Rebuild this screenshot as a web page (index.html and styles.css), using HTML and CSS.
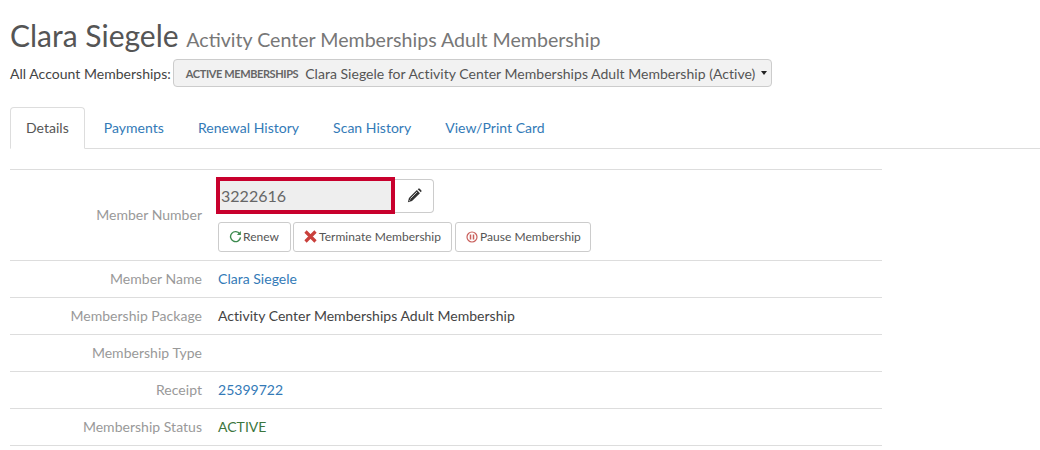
FILE: index.html
```html
<!DOCTYPE html>
<html lang="en">
<head>
    <meta charset="UTF-8">
    <title>Clara Siegele Membership</title>
    <link rel="stylesheet" href="styles.css">
</head>
<body>
    <h1 class="page-title">Clara Siegele <small>Activity Center Memberships Adult Membership</small></h1>
    <div class="account-line">
        <span>All Account Memberships:</span>
        <button class="picker" type="button">
            <span class="picker-group">ACTIVE MEMBERSHIPS</span>
            <span>Clara Siegele for Activity Center Memberships Adult Membership (Active)</span>
            <span class="caret"></span>
        </button>
    </div>

    <ul class="tabs">
        <li class="tab active">Details</li>
        <li class="tab">Payments</li>
        <li class="tab">Renewal History</li>
        <li class="tab">Scan History</li>
        <li class="tab">View/Print Card</li>
    </ul>

    <div class="details">
        <div class="row row-number">
            <div class="label">Member Number</div>
            <div class="value">
                <div class="number-line">
                    <div class="number-box">3222616</div>
                    <button class="edit-btn" type="button" aria-label="Edit">
                        <svg width="15" height="15" viewBox="0 0 14 14"><path d="M.8 13.2l1-3.9 7.4-7.4 2.9 2.9-7.4 7.4z" fill="#333"/><path d="M10 1.1l.5-.4c.4-.4 1-.4 1.4 0l1.4 1.4c.4.4.4 1 0 1.4l-.4.5z" fill="#333"/><path d="M3.2 9.9l6.2-6.2M2.2 11.8l.9-.9" stroke="#fff" stroke-width=".7"/></svg>
                    </button>
                </div>
                <div class="actions">
                    <button class="btn btn-renew" type="button">
                        <svg width="13" height="13" viewBox="0 0 14 14"><path d="M11.6 4.2A5.4 5.4 0 1 0 12.4 8" fill="none" stroke="#3c8a4e" stroke-width="1.5"/><path d="M12.8 1.2v4.3H8.5z" fill="#3c8a4e"/></svg>
                        Renew
                    </button>
                    <button class="btn" type="button">
                        <svg width="13" height="13" viewBox="0 0 13 13"><path d="M1.5 1.5l10 10M11.5 1.5l-10 10" stroke="#c9403c" stroke-width="3.2"/></svg>
                        Terminate Membership
                    </button>
                    <button class="btn btn-pause" type="button">
                        <svg width="12" height="12" viewBox="0 0 12 12"><circle cx="6" cy="6" r="5" fill="none" stroke="#c9605c" stroke-width="1.2"/><path d="M4.5 3.6v4.8M7.5 3.6v4.8" stroke="#c9605c" stroke-width="1.5"/></svg>
                        Pause Membership
                    </button>
                </div>
            </div>
        </div>
        <div class="row">
            <div class="label">Member Name</div>
            <div class="value"><a href="#">Clara Siegele</a></div>
        </div>
        <div class="row">
            <div class="label">Membership Package</div>
            <div class="value">Activity Center Memberships Adult Membership</div>
        </div>
        <div class="row">
            <div class="label">Membership Type</div>
            <div class="value"></div>
        </div>
        <div class="row">
            <div class="label">Receipt</div>
            <div class="value"><a href="#">25399722</a></div>
        </div>
        <div class="row">
            <div class="label">Membership Status</div>
            <div class="value status">ACTIVE</div>
        </div>
    </div>
</body>
</html>
```

FILE: styles.css
```css
body {
    font-family: 'Lato', sans-serif;
    font-size: 14px;
    letter-spacing: .025px;
    color: #555;
    background: #fff;
    margin: 0;
    padding: 0 0 0 10px;
    overflow: hidden;
}
a {
    color: #337ab7;
    text-decoration: none;
}
.page-title {
    font-size: 30px;
    font-weight: 400;
    line-height: 36px;
    letter-spacing: 0;
    margin: 0;
    padding-top: 17px;
}
.page-title small {
    font-size: 19.6px;
    color: #777;
}
.account-line {
    display: flex;
    align-items: center;
    gap: 2px;
    margin-top: 1px;
    height: 28px;
    color: #444;
}
.picker {
    display: flex;
    align-items: center;
    height: 28px;
    padding: 0 4px 0 12px;
    font-family: inherit;
    font-size: 14px;
    letter-spacing: .03px;
    color: #555;
    background: #f2f2f2;
    border: 1px solid #ccc;
    border-radius: 4px;
}
.picker-group {
    font-size: 11px;
    font-weight: 700;
    letter-spacing: -.4px;
    color: #666;
    margin-right: 7px;
}
.caret {
    width: 0;
    height: 0;
    margin-left: 6px;
    border-top: 4px solid #222;
    border-left: 3.5px solid transparent;
    border-right: 3.5px solid transparent;
}
.tabs {
    display: flex;
    list-style: none;
    margin: 20px 0 0;
    padding: 0;
    border-bottom: 1px solid #ddd;
}
.tab {
    padding: 0 14px 0 18px;
    height: 40px;
    line-height: 40px;
    color: #337ab7;
    margin-bottom: -1px;
    border: 1px solid transparent;
}
.tab.active {
    padding: 0 15px;
    color: #555;
    background: #fff;
    border-color: #ddd;
    border-bottom-color: #fff;
    border-radius: 4px 4px 0 0;
}
.details {
    width: 872px;
    margin-top: 20px;
    border-top: 1px solid #ddd;
}
.row {
    display: flex;
    align-items: center;
    height: 34px;
    padding-bottom: 2px;
    border-bottom: 1px solid #ddd;
}
.row-number {
    height: 88px;
}
.row-number .value {
    margin-top: 1px;
}
.label {
    width: 192px;
    text-align: right;
    color: #999;
}
.value {
    margin-left: 16px;
    color: #444;
}
.status {
    color: #3c763d;
}
.number-line {
    display: flex;
    align-items: center;
    margin-left: -2px;
}
.number-box {
    box-sizing: border-box;
    width: 179px;
    height: 37px;
    line-height: 29px;
    padding-left: 1px;
    font-size: 16px;
    color: #666;
    background: #eee;
    border: 4px solid #c8002d;
}
.edit-btn {
    width: 39px;
    height: 34px;
    padding: 0;
    display: flex;
    align-items: center;
    justify-content: center;
    background: #fff;
    border: 1px solid #ccc;
    border-left: none;
    border-radius: 0 4px 4px 0;
}
.actions {
    display: flex;
    gap: 2px;
    margin-top: 8px;
}
.btn {
    display: flex;
    align-items: center;
    gap: 2px;
    height: 30px;
    padding: 0 10px 1px;
    font-family: inherit;
    font-size: 12px;
    letter-spacing: .03px;
    color: #555;
    background: #fff;
    border: 1px solid #ccc;
    border-radius: 3px;
}
.btn-renew {
    gap: 1px;
    padding-right: 11px;
}
.btn-pause {
    margin-left: 1px;
    padding-right: 9px;
}
```
